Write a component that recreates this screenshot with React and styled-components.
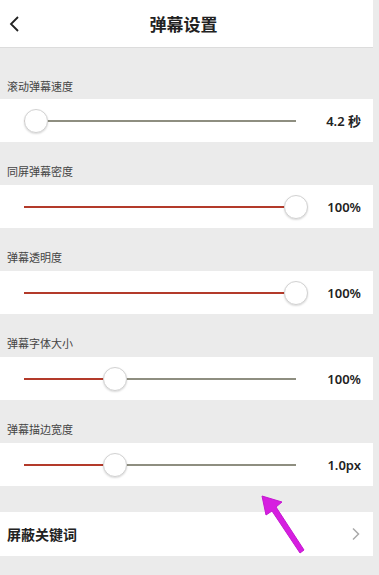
import React from "react";
import styled, { createGlobalStyle } from "styled-components";

const GlobalStyle = createGlobalStyle`
  html, body {
    margin: 0;
    padding: 0;
    background: #ebebeb;
  }
  body {
    font-family: "Noto Sans CJK SC", "Noto Sans", sans-serif;
  }
`;

// knob = centre of the thumb in px along the 272px track
const settings = [
  { id: 1, label: "滚动弹幕速度", value: "4.2 秒", knob: 12 },
  { id: 2, label: "同屏弹幕密度", value: "100%", knob: 272 },
  { id: 3, label: "弹幕透明度", value: "100%", knob: 272 },
  { id: 4, label: "弹幕字体大小", value: "100%", knob: 91 },
  { id: 5, label: "弹幕描边宽度", value: "1.0px", knob: 91 },
];

const App = () => {
  return (
    <Page>
      <GlobalStyle />
      <Header>
        <BackButton>
          <svg width="14" height="18" viewBox="0 0 14 18">
            <path d="M10 2 L3 9 L10 16" fill="none" stroke="#222" strokeWidth="1.8" />
          </svg>
        </BackButton>
        <Title>弹幕设置</Title>
      </Header>
      <TopGap />
      {settings.map((item, i) => (
        <Section key={item.id}>
          <Label first={i === 0}>{item.label}</Label>
          <SliderRow>
            <Track>
              <Filled style={{ width: `${item.knob}px` }} />
              <Knob style={{ left: `${item.knob}px` }} />
            </Track>
            <Value>{item.value}</Value>
          </SliderRow>
        </Section>
      ))}
      <Spacer />
      <LinkRow>
        <LinkText>屏蔽关键词</LinkText>
        <svg width="10" height="14" viewBox="0 0 10 14">
          <path d="M2 1.5 L7.5 7 L2 12.5" fill="none" stroke="#aaa" strokeWidth="1.5" />
        </svg>
      </LinkRow>
      <Arrow width="60" height="70" viewBox="0 0 60 70">
        <path
          d="M2 2 L22 8 L16 13 L44 56 L40 59 L12 17 L6 21 Z"
          fill="#d61ee0"
          stroke="#c418d0"
          strokeWidth="1"
          strokeLinejoin="round"
        />
      </Arrow>
    </Page>
  );
};

export default App;

const Page = styled.div`
  position: relative;
  width: 379px;
  height: 575px;
  overflow: hidden;
  background: #ebebeb;
  box-sizing: border-box;
  padding-right: 6px;
`;

const Header = styled.div`
  position: relative;
  height: 47px;
  background: #fff;
  border-bottom: 1px solid #dcdcdc;
  display: flex;
  align-items: center;
  justify-content: center;
`;

const BackButton = styled.div`
  position: absolute;
  left: 8px;
  top: 15px;
  display: flex;
`;

const Title = styled.div`
  font-size: 17px;
  font-weight: 700;
  color: #222;
  margin-left: -6px;
`;

const TopGap = styled.div`
  height: 23px;
`;

const Section = styled.div`
  display: flex;
  flex-direction: column;
`;

const Label = styled.div`
  height: ${(p) => (p.first ? "28px" : "43px")};
  display: flex;
  align-items: flex-start;
  padding-top: ${(p) => (p.first ? "7px" : "21px")};
  box-sizing: border-box;
  padding-left: 7px;
  font-size: 11px;
  color: #444;
`;

const SliderRow = styled.div`
  height: 43px;
  background: #fff;
  display: flex;
  align-items: center;
  padding: 0 12px 0 24px;
`;

const Track = styled.div`
  position: relative;
  width: 272px;
  height: 2px;
  background: #8e8e80;
`;

const Filled = styled.div`
  height: 2px;
  background: #b33a2a;
`;

const Knob = styled.div`
  position: absolute;
  top: 50%;
  width: 22px;
  height: 22px;
  border-radius: 50%;
  background: #fff;
  border: 1px solid #d2d2d2;
  box-shadow: 0 1px 2px rgba(0, 0, 0, 0.15);
  transform: translate(-50%, -50%);
`;

const Value = styled.div`
  margin-left: auto;
  font-family: "Noto Sans", "Noto Sans CJK SC", sans-serif;
  font-size: 13px;
  font-weight: 600;
  color: #222;
`;

const Spacer = styled.div`
  height: 26px;
`;

const LinkRow = styled.div`
  height: 44px;
  background: #fff;
  display: flex;
  align-items: center;
  justify-content: space-between;
  padding: 0 12px 0 7px;
`;

const LinkText = styled.div`
  font-size: 14px;
  font-weight: 700;
  color: #222;
`;

const Arrow = styled.svg`
  position: absolute;
  left: 260px;
  top: 494px;
`;
